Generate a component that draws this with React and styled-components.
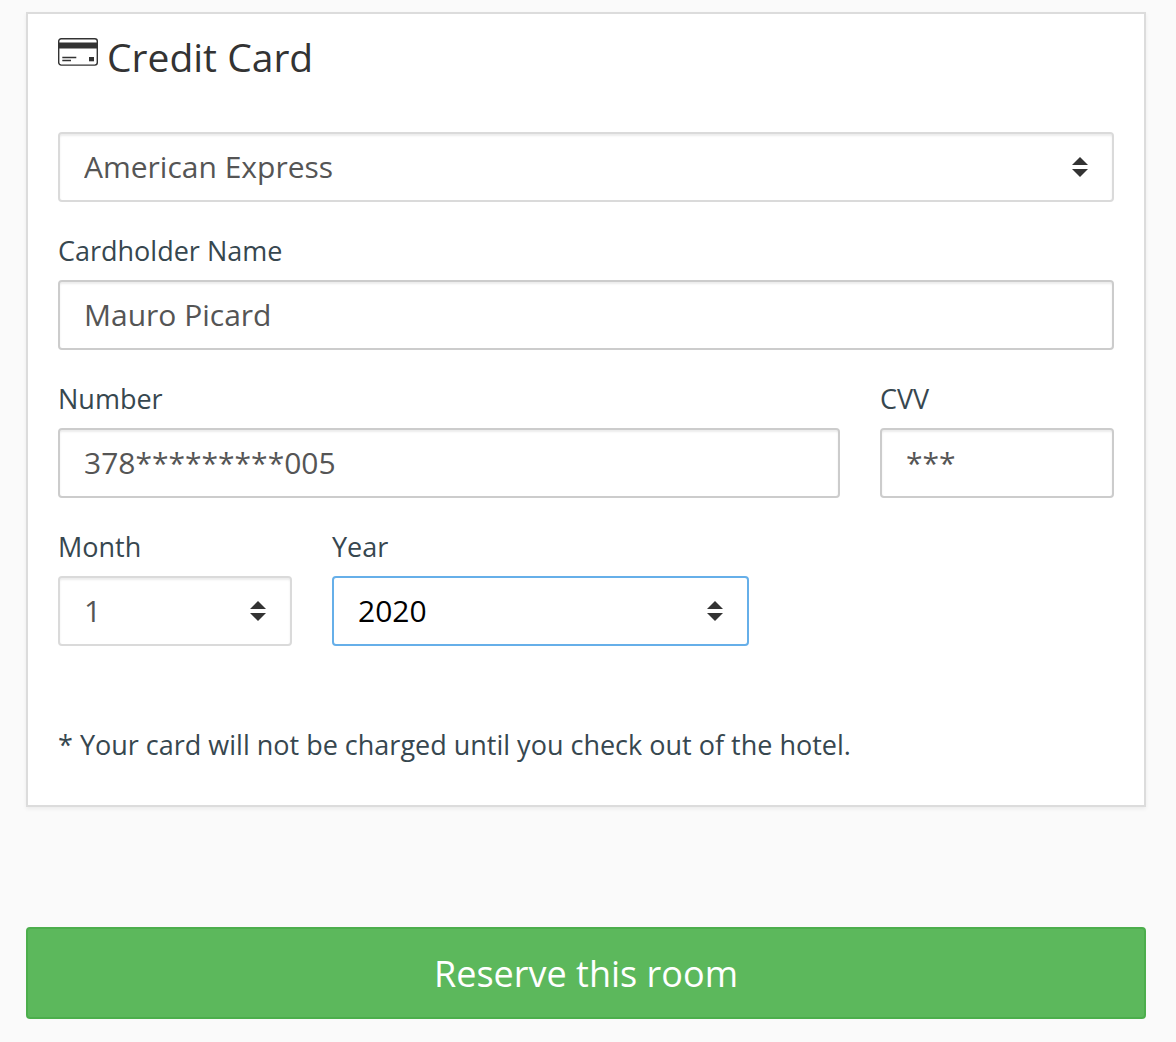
import { useState } from 'react';
import styled, { createGlobalStyle } from 'styled-components';

const GlobalStyle = createGlobalStyle`
  * {
    box-sizing: border-box;
  }

  body {
    margin: 0;
    background-color: #fafafa;
    color: #37474f;
    font-family: "Open Sans", "Noto Sans", sans-serif;
    font-size: 27px;
    line-height: 38px;
  }
`;

const Page = styled.form`
  display: flex;
  flex-direction: column;
  gap: 120px;
  padding: 12px 30px 24px 26px;
`;

const Card = styled.section`
  padding: 20px 30px 41px;
  background-color: white;
  border: 2px solid #dcdcdc;
  box-shadow: 0 2px 4px rgba(0, 0, 0, 0.06);
`;

const CardTitle = styled.h2`
  display: flex;
  align-items: flex-start;
  gap: 9px;
  margin: 0 0 52px;
  color: #333333;
  font-size: 39px;
  font-weight: 400;
  line-height: 46px;

  svg {
    margin-top: 4px;
  }
`;

const Fields = styled.div`
  display: grid;
  grid-template-columns: repeat(12, 1fr);
  gap: 30px 40px;
`;

const Field = styled.div`
  grid-column: span ${props => props.$span || 12};
  display: flex;
  flex-direction: column;
  gap: 10px;
  min-width: 0;
`;

const controlStyles = `
  width: 100%;
  height: 70px;
  margin: 0;
  padding: 0 24px;
  background-color: white;
  border: 2px solid #cccccc;
  border-radius: 4px;
  box-shadow: inset 0 2px 2px rgba(0, 0, 0, 0.075);
  color: #555555;
  font-family: inherit;
  font-size: 30px;
  line-height: 40px;
  outline: none;

  &:focus {
    border-color: #66afe9;
    box-shadow: none;
    color: black;
  }
`;

const Input = styled.input`
  ${controlStyles}
  padding-bottom: 2px;
`;

const SelectWrapper = styled.div`
  position: relative;

  select {
    ${controlStyles}
    appearance: none;
    padding-right: 60px;
  }

  select:not(:focus) {
    border-color: #dadada;
  }

  svg {
    position: absolute;
    top: 25px;
    right: 26px;
    pointer-events: none;
  }
`;

const Note = styled.p`
  margin: 80px 0 0;
`;

const ReserveButton = styled.button`
  width: 100%;
  padding: 22px 20px 20px;
  background-color: #5cb85c;
  border: 2px solid #4cae4c;
  border-radius: 4px;
  color: white;
  font-family: inherit;
  font-size: 36px;
  line-height: 46px;
  cursor: pointer;
`;

const CardIcon = () => (
  <svg width="40" height="28" viewBox="0 0 40 28" aria-hidden="true">
    <rect x="0.7" y="0.7" width="38.6" height="26.4" rx="2.5" fill="none" stroke="#333" strokeWidth="1.4" />
    <path d="M1 4.6h38v5.8H1z" fill="#333" />
    <path d="M4.3 19.4h14M4.3 22.6h8.7" stroke="#333" strokeWidth="1.5" />
    <path d="M31 19h5v4.3h-5z" fill="#333" />
  </svg>
)

const Select = ({ options, ...props }) => (
  <SelectWrapper>
    <select {...props}>
      {options.map(option => <option key={option}>{option}</option>)}
    </select>
    <svg width="16" height="20" viewBox="0 0 16 20" aria-hidden="true">
      <path d="M8 0l8 8H0zM0 12h16l-8 8z" fill="#333" />
    </svg>
  </SelectWrapper>
)

const cardTypes = ['American Express', 'Mastercard', 'Visa'];
const months = Array.from({ length: 12 }, (_, i) => String(i + 1));
const years = Array.from({ length: 8 }, (_, i) => String(2018 + i));

export default function App() {
  const [card, setCard] = useState({
    type: 'American Express',
    name: 'Mauro Picard',
    number: '378*********005',
    cvv: '***',
    month: '1',
    year: '2020'
  });

  const bind = (name) => ({
    id: name,
    name,
    value: card[name],
    onChange: (e) => setCard({ ...card, [name]: e.target.value })
  });

  return (
    <>
      <GlobalStyle />
      <Page onSubmit={(e) => e.preventDefault()}>
        <Card>
          <CardTitle>
            <CardIcon />
            Credit Card
          </CardTitle>
          <Fields>
            <Field>
              <Select aria-label="Card type" options={cardTypes} {...bind('type')} />
            </Field>
            <Field>
              <label htmlFor="name">Cardholder Name</label>
              <Input {...bind('name')} />
            </Field>
            <Field $span={9}>
              <label htmlFor="number">Number</label>
              <Input {...bind('number')} />
            </Field>
            <Field $span={3}>
              <label htmlFor="cvv">CVV</label>
              <Input {...bind('cvv')} />
            </Field>
            <Field $span={3}>
              <label htmlFor="month">Month</label>
              <Select options={months} {...bind('month')} />
            </Field>
            <Field $span={5}>
              <label htmlFor="year">Year</label>
              <Select options={years} autoFocus {...bind('year')} />
            </Field>
          </Fields>
          <Note>* Your card will not be charged until you check out of the hotel.</Note>
        </Card>
        <ReserveButton type="submit">Reserve this room</ReserveButton>
      </Page>
    </>
  )
}
